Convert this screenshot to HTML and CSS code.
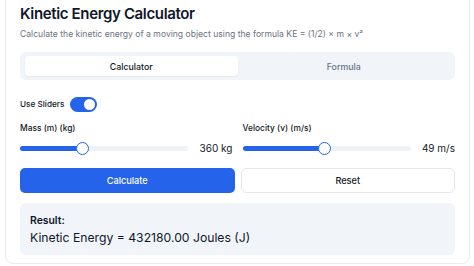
FILE: index.html
```html
<!DOCTYPE html>
<html>
<head>
<meta charset="utf-8">
<link rel="stylesheet" href="styles.css">
</head>
<body>
<div class="card">
  <h1 class="title">Kinetic Energy Calculator</h1>
  <p class="subtitle">Calculate the kinetic energy of a moving object using the formula KE = (1/2) × m × v²</p>
  <div class="tabs">
    <div class="tab active">Calculator</div>
    <div class="tab">Formula</div>
  </div>
  <div class="toggle-row">
    <span class="label">Use Sliders</span>
    <span class="switch"><span class="knob"></span></span>
  </div>
  <div class="fields">
    <div class="field">
      <div class="label">Mass (m) (kg)</div>
      <div class="slider-row">
        <div class="slider">
          <div class="fill" style="width:37%"></div>
          <div class="thumb" style="left:37%"></div>
        </div>
        <span class="value">360 kg</span>
      </div>
    </div>
    <div class="field">
      <div class="label">Velocity (v) (m/s)</div>
      <div class="slider-row">
        <div class="slider">
          <div class="fill" style="width:49%"></div>
          <div class="thumb" style="left:49%"></div>
        </div>
        <span class="value">49 m/s</span>
      </div>
    </div>
  </div>
  <div class="buttons">
    <button class="btn primary">Calculate</button>
    <button class="btn secondary">Reset</button>
  </div>
  <div class="result">
    <div class="result-title">Result:</div>
    <div class="result-text">Kinetic Energy = 432180.00 Joules (J)</div>
  </div>
</div>
</body>
</html>
```
FILE: styles.css
```css
* { box-sizing: border-box; }
html, body { margin: 0; padding: 0; background: #ffffff; }
body {
  font-family: Inter, "Liberation Sans", sans-serif;
  color: #0f172a;
  overflow: hidden;
}
.card {
  margin: -12px 4px 0 5px;
  border: 1px solid #e8ebef;
  border-radius: 8px;
  padding: 13px 14px 8px 14px;
}
.title {
  margin: 0;
  font-size: 15px;
  line-height: 24px;
  font-weight: 600;
  letter-spacing: -0.35px;
}
.subtitle {
  margin: 2px 0 0 0;
  font-size: 8.6px;
  line-height: 12px;
  color: #6b7280;
}
.tabs {
  margin-top: 12px;
  display: grid;
  grid-template-columns: 1fr 1fr;
  background: #f1f5f9;
  border-radius: 6px;
  padding: 4px 5px;
  height: 28px;
}
.tab {
  font-size: 8.8px;
  font-weight: 500;
  color: #64748b;
  display: flex;
  align-items: center;
  justify-content: center;
  border-radius: 4px;
}
.tab.active {
  background: #ffffff;
  color: #0f172a;
  box-shadow: 0 1px 2px rgba(0,0,0,0.05);
}
.toggle-row {
  margin-top: 16px;
  display: flex;
  align-items: center;
  gap: 6px;
  height: 16px;
}
.label {
  font-size: 8.4px;
  line-height: 12px;
  font-weight: 500;
  color: #111827;
}
.toggle-row .label { font-size: 8.2px; }
.switch {
  width: 27px;
  height: 15px;
  border-radius: 8px;
  background: #2563eb;
  display: flex;
  align-items: center;
  justify-content: flex-end;
  padding: 0 2px;
}
.knob {
  width: 11px;
  height: 11px;
  border-radius: 50%;
  background: #ffffff;
}
.fields {
  margin-top: 10px;
  display: grid;
  grid-template-columns: 1fr 1fr;
  gap: 10px;
}
.field { display: flex; flex-direction: column; gap: 7px; }
.slider-row {
  display: flex;
  align-items: center;
  justify-content: space-between;
  height: 14px;
}
.slider {
  position: relative;
  width: 168px;
  height: 5px;
  border-radius: 3px;
  background: #eef2f7;
}
.fill {
  height: 100%;
  border-radius: 3px;
  background: #2563eb;
}
.thumb {
  position: absolute;
  top: 50%;
  width: 13px;
  height: 13px;
  margin: -6.5px 0 0 -6.5px;
  border-radius: 50%;
  background: #ffffff;
  border: 1.5px solid #2563eb;
}
.value {
  font-size: 10px;
  color: #111827;
}
.buttons {
  margin-top: 13px;
  display: grid;
  grid-template-columns: 1fr 1fr;
  gap: 6px;
}
.btn {
  height: 25px;
  border-radius: 5px;
  font-family: inherit;
  font-size: 9.2px;
  font-weight: 500;
  padding: 0;
}
.primary {
  background: #2563eb;
  color: #ffffff;
  border: none;
}
.secondary {
  background: #ffffff;
  color: #111827;
  border: 1px solid #e5e7eb;
}
.result {
  margin-top: 10px;
  background: #f1f5f9;
  border-radius: 6px;
  padding: 11px 10px 10px 10px;
  height: 52px;
}
.result-title {
  font-size: 10.4px;
  line-height: 13px;
  font-weight: 600;
}
.result-text {
  margin-top: 2px;
  font-size: 12.2px;
  line-height: 17px;
}
```
